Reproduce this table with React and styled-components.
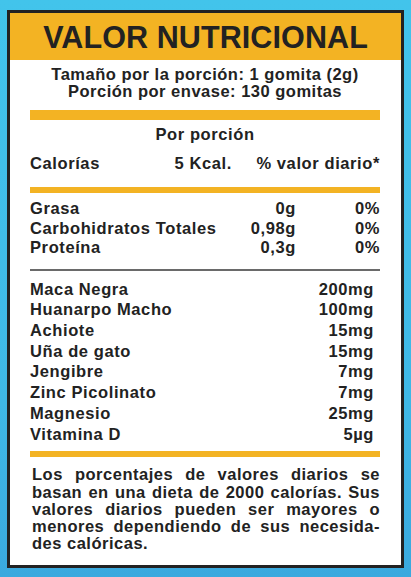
import React from 'react';
import styled, { createGlobalStyle } from 'styled-components';

const nutrients = [
    { name: 'Grasa', amount: '0g', daily: '0%' },
    { name: 'Carbohidratos Totales', amount: '0,98g', daily: '0%' },
    { name: 'Proteína', amount: '0,3g', daily: '0%' },
];

const ingredients = [
    { name: 'Maca Negra', amount: '200mg' },
    { name: 'Huanarpo Macho', amount: '100mg' },
    { name: 'Achiote', amount: '15mg' },
    { name: 'Uña de gato', amount: '15mg' },
    { name: 'Jengibre', amount: '7mg' },
    { name: 'Zinc Picolinato', amount: '7mg' },
    { name: 'Magnesio', amount: '25mg' },
    { name: 'Vitamina D', amount: '5µg' },
];

function App() {
    return (
        <>
            <GlobalStyle />
            <Page>
                <Label>
                    <Header>VALOR NUTRICIONAL</Header>
                    <Body>
                        <Serving>
                            <p>Tamaño por la porción: 1 gomita (2g)</p>
                            <p>Porción por envase: 130 gomitas</p>
                        </Serving>
                        <Bar thick />
                        <PerServing>Por porción</PerServing>
                        <CaloriesRow>
                            <span>Calorías</span>
                            <span>5 Kcal.</span>
                            <span>% valor diario*</span>
                        </CaloriesRow>
                        <Bar />
                        <NutrientList>
                            {nutrients.map((n) => (
                                <NutrientRow key={n.name}>
                                    <span>{n.name}</span>
                                    <span>{n.amount}</span>
                                    <span>{n.daily}</span>
                                </NutrientRow>
                            ))}
                        </NutrientList>
                        <Divider />
                        <IngredientList>
                            {ingredients.map((i) => (
                                <IngredientRow key={i.name}>
                                    <span>{i.name}</span>
                                    <span>{i.amount}</span>
                                </IngredientRow>
                            ))}
                        </IngredientList>
                        <Bar />
                        <Footnote>
                            Los porcentajes de valores diarios se basan en una dieta de 2000 calorías. Sus valores diarios pueden ser mayores o menores dependiendo de sus necesida-des calóricas.
                        </Footnote>
                    </Body>
                </Label>
            </Page>
        </>
    );
}

export default App;

const GlobalStyle = createGlobalStyle`
    * { box-sizing: border-box; }
    body {
        margin: 0;
        font-family: "Liberation Sans", Arial, sans-serif;
        color: #222;
    }
`;

const Page = styled.div`
    width: 411px;
    height: 577px;
    padding: 10px 7px 9px 7px;
    background: linear-gradient(180deg, #42c4eb 0%, #3fb8e6 70%, #3aa9de 100%);
`;

const Label = styled.div`
    height: 558px;
    background: #fff;
    border: 3px solid #222;
    display: flex;
    flex-direction: column;
`;

const Header = styled.h1`
    margin: 0;
    height: 47px;
    background: #f3b323;
    font-size: 30.5px;
    font-weight: bold;
    line-height: 48px;
    text-align: center;
    letter-spacing: 0.1px;
    color: #222;
`;

const Body = styled.div`
    padding: 0 21px 0 20px;
    font-size: 16.5px;
    font-weight: bold;
    letter-spacing: 0.6px;
    white-space: nowrap;
`;

const Serving = styled.div`
    padding: 6px 0 10px;
    text-align: center;
    letter-spacing: 0.5px;

    p {
        margin: 0;
        line-height: 17px;
    }
`;

const Bar = styled.div`
    height: ${({ thick }) => (thick ? '10px' : '6px')};
    background: #f3b323;
`;

const PerServing = styled.div`
    margin-top: 5px;
    line-height: 18px;
    text-align: center;
`;

const CaloriesRow = styled.div`
    display: grid;
    grid-template-columns: 1fr auto 148px;
    line-height: 20px;
    margin: 10px 0 14px;

    span:nth-child(2), span:nth-child(3) { text-align: right; }
`;

const NutrientList = styled.div`
    padding: 6px 0 11px;
`;

const NutrientRow = styled.div`
    display: grid;
    grid-template-columns: 1fr auto 84px;
    line-height: 19.7px;

    span:nth-child(2), span:nth-child(3) { text-align: right; }
`;

const Divider = styled.div`
    height: 1.5px;
    background: #6a6a6a;
`;

const IngredientList = styled.div`
    padding: 8px 6px 7px 0;
`;

const IngredientRow = styled.div`
    display: flex;
    justify-content: space-between;
    line-height: 20.7px;
`;

const Footnote = styled.p`
    margin: 9px 0 0;
    text-align: justify;
    white-space: normal;
    line-height: 17.3px;
    letter-spacing: 0.5px;
    padding-left: 2px;
`;
